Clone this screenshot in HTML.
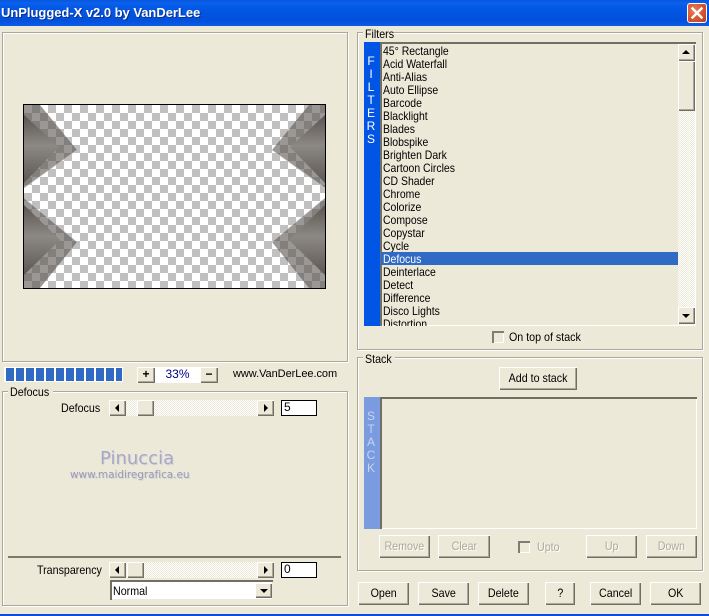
<!DOCTYPE html>
<html><head><meta charset="utf-8"><title>UnPlugged-X</title>
<style>
html,body{margin:0;padding:0}
body{width:709px;height:616px;position:relative;overflow:hidden;background:#ece9d8;font:12px/13px "Liberation Sans",sans-serif;color:#000}
div{position:absolute;box-sizing:border-box;white-space:nowrap}
.g{border:1px solid #aca899;box-shadow:inset 1px 1px #fff,1px 1px #fff}
.l{background:#ece9d8;padding:0 2px}
.s{transform:scaleX(.89);transform-origin:0 0}
.b{background:#ece9d8;box-shadow:inset 1px 1px #fff,inset -1px -1px #716f64,inset -2px -2px #aca899;text-align:center;line-height:22px}
.b span{display:inline-block;transform:scaleX(.89)}
.d{color:#aca899;text-shadow:1px 1px #fff}
.sunk{box-shadow:inset 2px 2px #716f64,inset -1px -1px #fff}
.dith{background-color:#fff;background-image:conic-gradient(#ece9d8 25%,#fff 0 50%,#ece9d8 0 75%,#fff 0);background-size:2px 2px}
.u,.dn,.lf,.rt{width:0;height:0;border-style:solid;border-color:transparent}
.u{border-width:0 4px 4px;border-bottom-color:#000}
.dn{border-width:4px 4px 0;border-top-color:#000}
.lf{border-width:4px 4px 4px 0;border-right-color:#000}
.rt{border-width:4px 0 4px 4px;border-left-color:#000}
.row{left:3px;height:13px;transform:scaleX(.87);transform-origin:0 0}
.cb{background:#ece9d8;box-shadow:inset 2px 2px #807e72,inset -1px -1px #fff}
.inp{background:#fff;border:1px solid #000;padding-left:2px;line-height:13px}
.f{left:363px;width:16px;text-align:center;color:#fff;font-size:12px}
</style></head><body>

<div style="left:0;top:0;width:709px;height:26px;background:linear-gradient(#0a53d8 0,#0a62ee 3px,#0358e4 8px,#0250dc 20px,#0a5ae6 25px)"></div>
<div style="left:1px;top:5px;font:bold 13px/16px 'Liberation Sans',sans-serif;color:#fff;text-shadow:1px 1px #0a2f90;letter-spacing:-.03px">UnPlugged-X v2.0 by VanDerLee</div>
<div style="left:687px;top:3px;width:20px;height:20px;border:1px solid #fff;border-radius:3px;background:radial-gradient(circle at 35% 35%,#e8805a,#d5502c 60%,#b83a1a)">
<svg width="18" height="18" style="position:absolute;left:0;top:0"><path d="M4.5 4.5L13.5 13.5M13.5 4.5L4.5 13.5" stroke="#fff" stroke-width="2.4" stroke-linecap="square"/></svg></div>

<div class="g" style="left:2px;top:32px;width:346px;height:330px"></div>
<svg width="303" height="185" style="position:absolute;left:23px;top:104px">
<defs>
<pattern id="c" width="16" height="16" patternUnits="userSpaceOnUse" x="1" y="1"><rect width="16" height="16" fill="#fff"/><rect x="8" width="8" height="8" fill="#c0c0c0"/><rect y="8" width="8" height="8" fill="#c0c0c0"/></pattern>
<linearGradient id="t1" x1="0" y1="0" x2="0" y2="1"><stop offset="0" stop-color="#5a5550"/><stop offset=".45" stop-color="#8c8883"/><stop offset="1" stop-color="#5c5752"/></linearGradient>
<g id="half">
<path d="M1 1H17L54 46L1 84Z" fill="#5c5752" fill-opacity=".62"/>
<path d="M1 94L54 138L17 184H1Z" fill="#5c5752" fill-opacity=".62"/>
<path d="M1 11L36 43L1 79Z" fill="url(#t1)"/>
<path d="M1 101L37 136L1 171Z" fill="url(#t1)"/>
<path d="M1 84L54 46" stroke="#d8d6d2" stroke-opacity=".5" fill="none"/>
<path d="M1 94L54 138" stroke="#d8d6d2" stroke-opacity=".4" fill="none"/>
</g>
</defs>
<rect x=".5" y=".5" width="302" height="184" fill="url(#c)" stroke="#000"/>
<use href="#half"/>
<use href="#half" transform="translate(303,0) scale(-1,1)"/>
<rect x=".5" y=".5" width="302" height="184" fill="none" stroke="#000"/>
</svg>

<div style="left:4px;top:367px;width:119px;height:15px;background:#fff"></div>
<div style="left:6px;top:368px;width:8px;height:13px;background:#316ac5"></div>
<div style="left:16px;top:368px;width:8px;height:13px;background:#316ac5"></div>
<div style="left:26px;top:368px;width:8px;height:13px;background:#316ac5"></div>
<div style="left:36px;top:368px;width:8px;height:13px;background:#316ac5"></div>
<div style="left:46px;top:368px;width:8px;height:13px;background:#316ac5"></div>
<div style="left:56px;top:368px;width:8px;height:13px;background:#316ac5"></div>
<div style="left:66px;top:368px;width:8px;height:13px;background:#316ac5"></div>
<div style="left:76px;top:368px;width:8px;height:13px;background:#316ac5"></div>
<div style="left:86px;top:368px;width:8px;height:13px;background:#316ac5"></div>
<div style="left:96px;top:368px;width:8px;height:13px;background:#316ac5"></div>
<div style="left:106px;top:368px;width:8px;height:13px;background:#316ac5"></div>
<div style="left:116px;top:368px;width:6px;height:13px;background:#316ac5"></div>

<div style="left:155px;top:367px;width:45px;height:16px;background:#fff;color:#000080;text-align:center;line-height:15px">33%</div>
<div class="b" style="left:137px;top:367px;width:18px;height:16px;line-height:14px;font-weight:bold">+</div>
<div class="b" style="left:200px;top:367px;width:18px;height:16px;line-height:14px;font-weight:bold">−</div>
<div style="left:233px;top:368px;font-size:11px;letter-spacing:-.05px">www.VanDerLee.com</div>

<div class="g" style="left:2px;top:391px;width:346px;height:215px"></div>
<div class="l" style="left:8px;top:386px"><div class="s" style="position:static;display:inline-block;width:41px">Defocus</div></div>
<div class="s" style="left:61px;top:402px">Defocus</div>
<div class="dith" style="left:109px;top:400px;width:165px;height:16px"></div>
<div class="b" style="left:109px;top:400px;width:17px;height:16px"><div class="lf" style="left:6px;top:4px"></div></div>
<div class="b" style="left:137px;top:400px;width:17px;height:16px"></div>
<div class="b" style="left:257px;top:400px;width:17px;height:16px"><div class="rt" style="left:7px;top:4px"></div></div>
<div class="inp" style="left:281px;top:400px;width:36px;height:16px">5</div>

<div style="left:100px;top:448px;font:18px/22px 'DejaVu Sans',sans-serif;color:#a8a8c6;text-shadow:1px 1px #d6d4d8">Pinuccia</div>
<div style="left:70px;top:468px;font:10.5px/14px 'DejaVu Sans',sans-serif;color:#9a9ab4;text-shadow:1px 1px #d6d4d8;letter-spacing:-.05px">www.maidiregrafica.eu</div>

<div style="left:8px;top:556px;width:333px;height:2px;background:#7d7a6c"></div>
<div class="s" style="left:37px;top:564px">Transparency</div>
<div class="dith" style="left:109px;top:562px;width:165px;height:16px"></div>
<div class="b" style="left:109px;top:562px;width:17px;height:16px"><div class="lf" style="left:6px;top:4px"></div></div>
<div class="b" style="left:127px;top:562px;width:17px;height:16px"></div>
<div class="b" style="left:257px;top:562px;width:17px;height:16px"><div class="rt" style="left:7px;top:4px"></div></div>
<div class="inp" style="left:281px;top:562px;width:36px;height:16px">0</div>
<div style="left:110px;top:580px;width:163px;height:20px;background:#fff;box-shadow:inset 2px 2px #716f64,inset -1px -1px #ece9d8"></div>
<div class="s" style="left:113px;top:585px">Normal</div>
<div class="b" style="left:255px;top:583px;width:17px;height:15px"><div class="dn" style="left:5px;top:6px"></div></div>

<div class="g" style="left:357px;top:32px;width:346px;height:318px"></div>
<div style="left:363px;top:27px;width:31px;height:13px;background:#ece9d8"></div>
<div class="s" style="left:365px;top:28px">Filters</div>
<div style="left:364px;top:42px;width:16px;height:284px;background:#0055e5"></div>
<div class="f" style="top:55px">F</div><div class="f" style="top:68px">I</div><div class="f" style="top:81px">L</div><div class="f" style="top:94px">T</div><div class="f" style="top:107px">E</div><div class="f" style="top:120px">R</div><div class="f" style="top:133px">S</div>

<div class="sunk" style="left:380px;top:42px;width:316px;height:284px;overflow:hidden">
<div class="row" style="top:3px">45° Rectangle</div>
<div class="row" style="top:16px">Acid Waterfall</div>
<div class="row" style="top:29px">Anti-Alias</div>
<div class="row" style="top:42px">Auto Ellipse</div>
<div class="row" style="top:55px">Barcode</div>
<div class="row" style="top:68px">Blacklight</div>
<div class="row" style="top:81px">Blades</div>
<div class="row" style="top:94px">Blobspike</div>
<div class="row" style="top:107px">Brighten Dark</div>
<div class="row" style="top:120px">Cartoon Circles</div>
<div class="row" style="top:133px">CD Shader</div>
<div class="row" style="top:146px">Chrome</div>
<div class="row" style="top:159px">Colorize</div>
<div class="row" style="top:172px">Compose</div>
<div class="row" style="top:185px">Copystar</div>
<div class="row" style="top:198px">Cycle</div>
<div style="left:1px;top:210px;width:297px;height:13px;background:#316ac5"></div>
<div class="row" style="top:211px;color:#fff">Defocus</div>
<div class="row" style="top:224px">Deinterlace</div>
<div class="row" style="top:237px">Detect</div>
<div class="row" style="top:250px">Difference</div>
<div class="row" style="top:263px">Disco Lights</div>
<div class="row" style="top:276px">Distortion</div>
<div class="dith" style="left:298px;top:2px;width:17px;height:281px"></div>
<div class="b" style="left:298px;top:2px;width:17px;height:17px"><div class="u" style="left:4px;top:6px"></div></div>
<div class="b" style="left:298px;top:19px;width:17px;height:50px"></div>
<div class="b" style="left:298px;top:265px;width:17px;height:17px"><div class="dn" style="left:4px;top:7px"></div></div>
</div>

<div class="cb" style="left:492px;top:331px;width:12px;height:12px"></div>
<div class="s" style="left:509px;top:331px">On top of stack</div>

<div class="g" style="left:357px;top:357px;width:346px;height:214px"></div>
<div style="left:363px;top:352px;width:32px;height:13px;background:#ece9d8"></div>
<div class="s" style="left:365px;top:353px">Stack</div>
<div class="b" style="left:499px;top:367px;width:78px;height:23px"><span>Add to stack</span></div>
<div style="left:364px;top:397px;width:16px;height:132px;background:#7b9be0"></div>
<div class="f" style="top:410px;color:#c8d4f0">S</div><div class="f" style="top:423px;color:#c8d4f0">T</div><div class="f" style="top:436px;color:#c8d4f0">A</div><div class="f" style="top:449px;color:#c8d4f0">C</div><div class="f" style="top:462px;color:#c8d4f0">K</div>
<div class="sunk" style="left:380px;top:397px;width:317px;height:132px"></div>

<div class="b d" style="left:379px;top:535px;width:51px;height:23px"><span>Remove</span></div>
<div class="b d" style="left:438px;top:535px;width:52px;height:23px"><span>Clear</span></div>
<div class="cb" style="left:518px;top:541px;width:12px;height:12px"></div>
<div class="d s" style="left:537px;top:541px">Upto</div>
<div class="b d" style="left:586px;top:535px;width:51px;height:23px"><span>Up</span></div>
<div class="b d" style="left:646px;top:535px;width:51px;height:23px"><span>Down</span></div>

<div class="b" style="left:358px;top:582px;width:51px;height:23px"><span>Open</span></div>
<div class="b" style="left:418px;top:582px;width:51px;height:23px"><span>Save</span></div>
<div class="b" style="left:478px;top:582px;width:51px;height:23px"><span>Delete</span></div>
<div class="b" style="left:545px;top:582px;width:30px;height:23px"><span>?</span></div>
<div class="b" style="left:590px;top:582px;width:51px;height:23px"><span>Cancel</span></div>
<div class="b" style="left:650px;top:582px;width:51px;height:23px"><span>OK</span></div>

<div style="left:0;top:614px;width:709px;height:2px;background:#0a4ee0"></div>
</body></html>
